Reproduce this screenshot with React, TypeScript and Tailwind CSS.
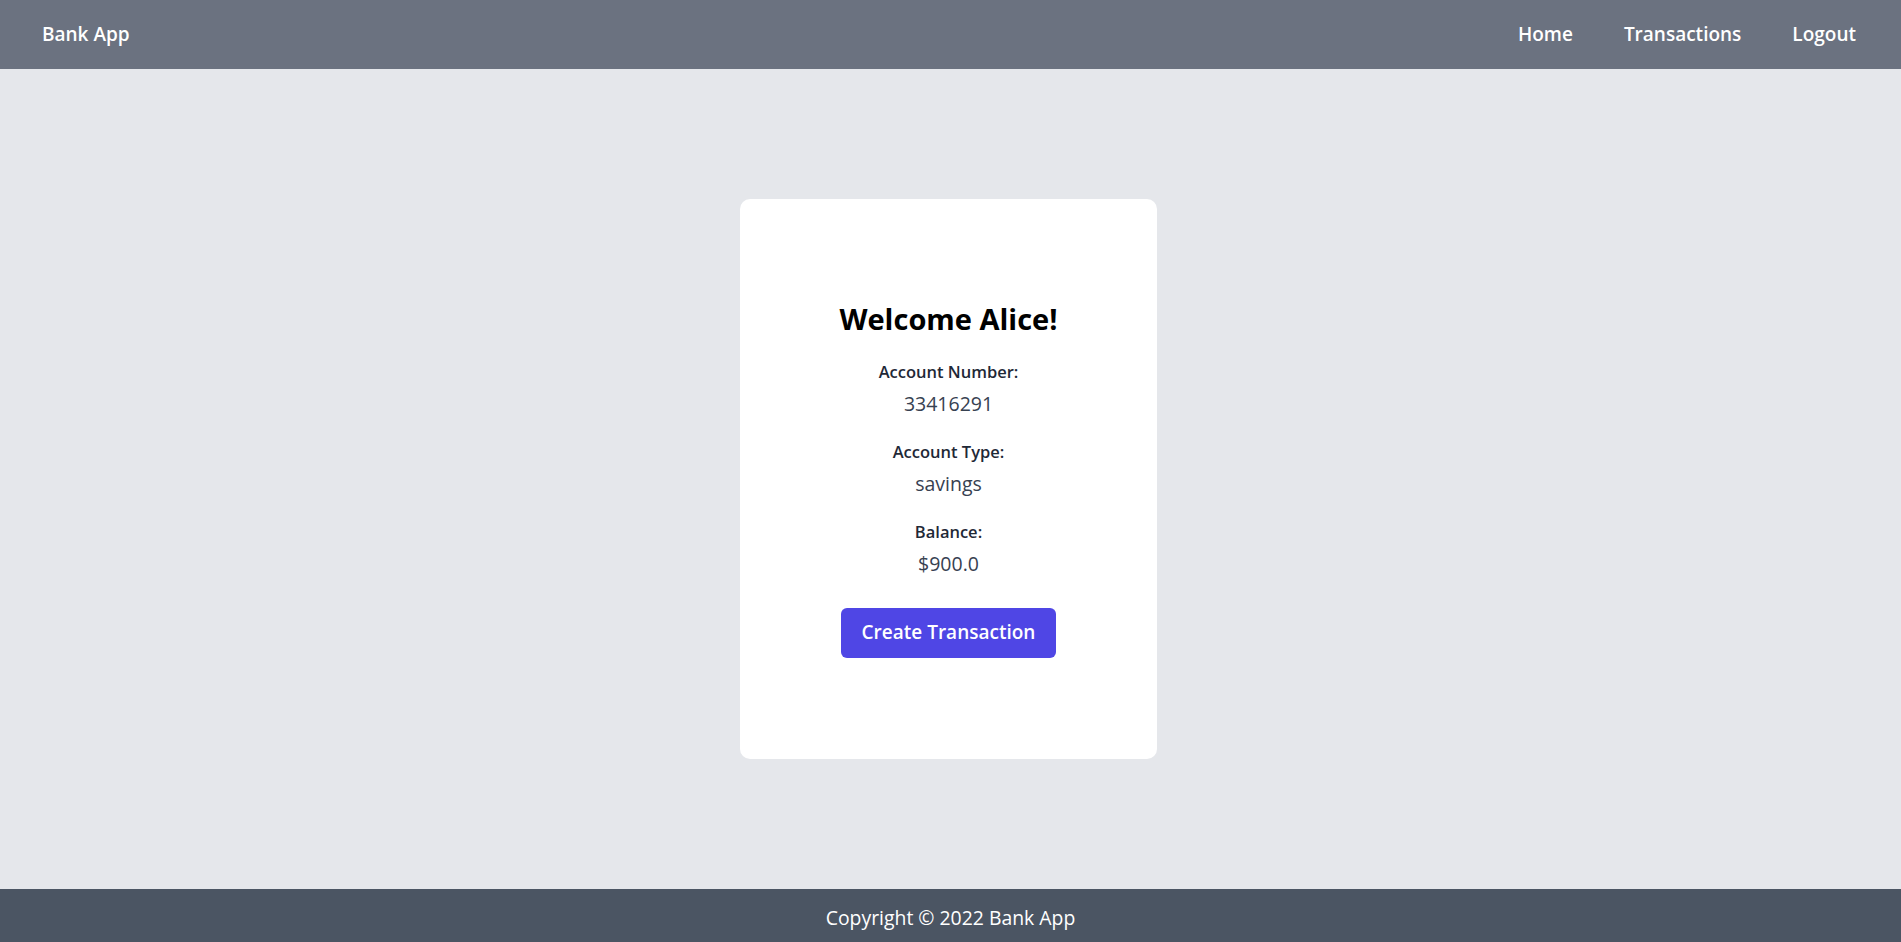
import React from "react";

export default function App() {
  const font = { fontFamily: '"Open Sans", "Noto Sans", sans-serif' };
  return (
    <div className="min-h-screen flex flex-col bg-[#e5e7eb]" style={font}>
      <header className="h-[69px] bg-[#6b7280] flex items-center justify-between pl-[42px] pr-[45px] text-white">
        <div className="text-[19px] font-semibold">Bank App</div>
        <nav className="flex items-center gap-[51px] text-[19px] font-semibold">
          <a>Home</a>
          <a>Transactions</a>
          <a>Logout</a>
        </nav>
      </header>
      <main className="flex-1 flex items-center justify-center pr-[4px]">
        <div className="w-[417px] h-[560px] bg-white rounded-[10px] flex flex-col items-center justify-center text-center">
          <h1 className="text-[29px] leading-[36px] font-bold text-black">Welcome Alice!</h1>
          <div className="mt-[23px] text-[16.5px] leading-[24px] font-semibold text-[#1f2937]">Account Number:</div>
          <div className="mt-[6px] text-[19.5px] leading-[28px] text-[#374151]">33416291</div>
          <div className="mt-[22px] text-[16.5px] leading-[24px] font-semibold text-[#1f2937]">Account Type:</div>
          <div className="mt-[6px] text-[19.5px] leading-[28px] text-[#374151]">savings</div>
          <div className="mt-[22px] text-[16.5px] leading-[24px] font-semibold text-[#1f2937]">Balance:</div>
          <div className="mt-[6px] text-[19.5px] leading-[28px] text-[#374151]">$900.0</div>
          <button className="mt-[30px] h-[50px] px-[21px] rounded-[6px] bg-[#4f46e5] text-white text-[19px] font-semibold">
            Create Transaction
          </button>
        </div>
      </main>
      <footer className="h-[53px] bg-[#4b5563] flex items-center justify-center text-white text-[19.4px] pt-[4px]">
        Copyright © 2022 Bank App
      </footer>
    </div>
  );
}
